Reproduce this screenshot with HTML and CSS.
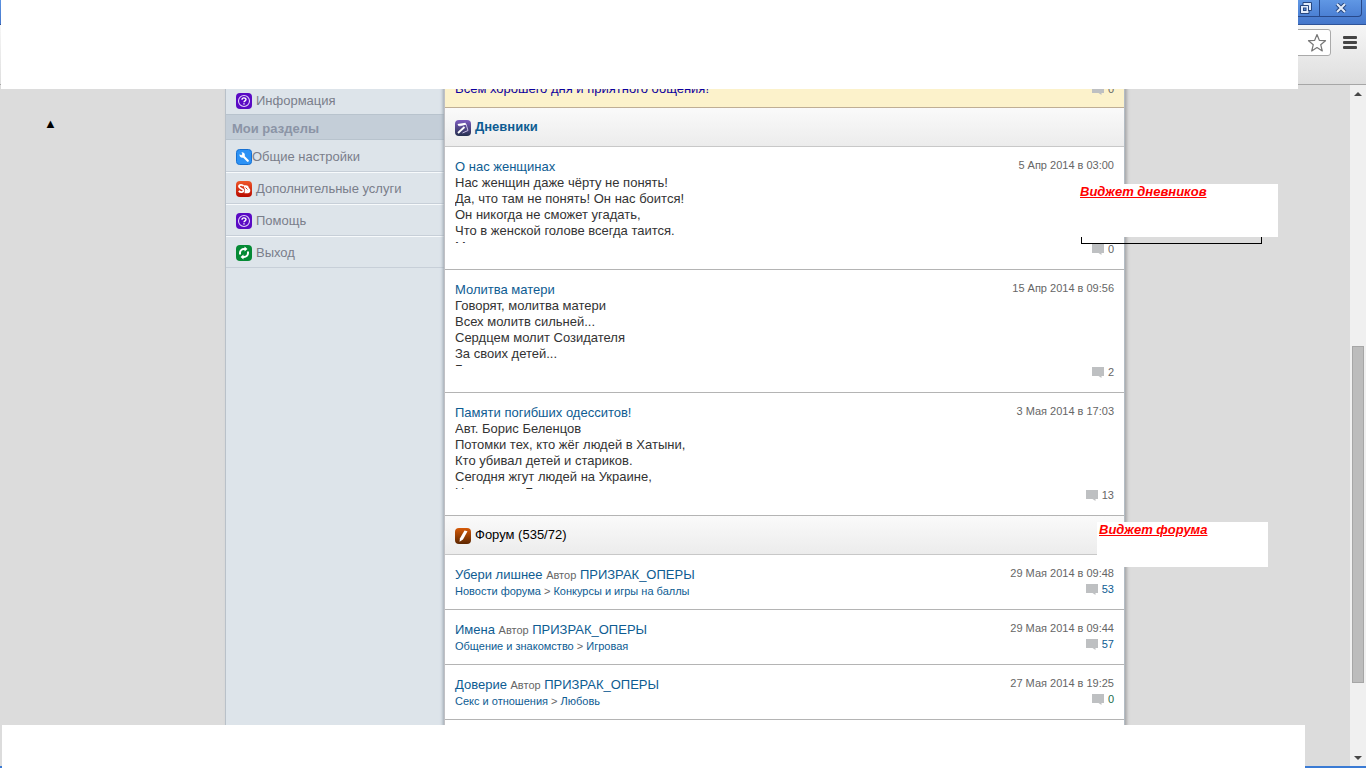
FILE: index.html
```html
<!DOCTYPE html>
<html lang="ru">
<head>
<meta charset="utf-8">
<title>Дневники и форум</title>
<link rel="stylesheet" href="styles.css">
</head>
<body>
<svg class="defs" aria-hidden="true">
  <defs>
    <linearGradient id="g-red" x1="0" y1="0" x2="0" y2="1"><stop offset="0" stop-color="#f0582a"/><stop offset="1" stop-color="#b80a00"/></linearGradient>
    <linearGradient id="g-violet" x1="0" y1="0" x2="0" y2="1"><stop offset="0" stop-color="#7d5cc0"/><stop offset="1" stop-color="#25304f"/></linearGradient>
    <linearGradient id="g-orange" x1="0" y1="0" x2="0" y2="1"><stop offset="0" stop-color="#d65a08"/><stop offset="1" stop-color="#5c2600"/></linearGradient>
    <symbol id="i-help" viewBox="0 0 16 16"><rect width="16" height="16" rx="4" fill="#5a0ac4"/><circle cx="8" cy="8" r="5.5" fill="none" stroke="#e3d3fa" stroke-width="1.1"/><path d="M6 6.7C6 4.3 10 4.4 10 6.5C10 7.9 8 7.8 8 9.3M8 10.3V11.6" fill="none" stroke="#fff" stroke-width="1.4"/></symbol>
    <symbol id="i-wrench" viewBox="0 0 16 16"><rect x=".5" y=".5" width="15" height="15" rx="3" fill="#2c92f5" stroke="#1670d2"/><path d="M7 7L11.8 11.8" stroke="#fff" stroke-width="2.2" stroke-linecap="round"/><path d="M3.6 5.2A2.7 2.7 0 1 0 5.4 3.4L6.4 5L5.2 6.2Z" fill="#fff"/></symbol>
    <symbol id="i-services" viewBox="0 0 16 16"><rect width="16" height="16" rx="4" fill="url(#g-red)"/><path d="M7.500 5C6.500 3.300 3 3.300 3 5.600C3 7.900 7.500 7.200 7.500 9.500C7.500 11.500 4 11.500 2.800 9.900" fill="none" stroke="#fff" stroke-width="1.800"/><path d="M7.500 4.500C11 3.500 13 5 12.800 7C15 8 14.800 12 12 12.300H8.500C8.500 11 9.300 9.500 8.700 8Z" fill="#fff"/><path d="M9.500 6.500L11.500 8.500" stroke="#d83a1c"/></symbol>
    <symbol id="i-exit" viewBox="0 0 16 16"><rect width="16" height="16" rx="4" fill="#058a35"/><path d="M4 9.500V8A4 4 0 0 1 8 4H9M12 6.500V8A4 4 0 0 1 8 12H7" fill="none" stroke="#fff" stroke-width="2"/><path d="M8.500 1.500L11.500 4L8.500 6.500ZM7.500 9.500L4.500 12L7.500 14.500Z" fill="#fff"/></symbol>
    <symbol id="i-diary" viewBox="0 0 16 16"><rect width="16" height="16" rx="4" fill="url(#g-violet)"/><path d="M4.500 6L11 4L13 10.500L7.500 13" fill="none" stroke="#c9c0e4"/><path d="M2.500 4L10.500 2.800L11 4.800L3.500 6Z" fill="#fff"/><path d="M3 13L9.500 7" stroke="#fff" stroke-width="1.800"/></symbol>
    <symbol id="i-forum" viewBox="0 0 16 16"><rect width="16" height="16" rx="4" fill="url(#g-orange)"/><path d="M9.500 2.500L12.500 3.200L8 11.500L4.500 13.800L5 10.300Z" fill="#fff"/></symbol>
    <symbol id="i-comment" viewBox="0 0 12 12"><path d="M0 1H12V10H9.500V12L6.500 10H0Z" fill="#bec0c2"/></symbol>
  </defs>
</svg>

<header class="titlebar">
  <button class="win-btn" aria-label="Свернуть в окно"><svg width="14" height="14" viewBox="0 0 14 14"><path d="M4 1.500H12.500V9.500H10V12.500H1.500V4.500H4Z" fill="#e2ecfb" stroke="#26467f"/><path d="M4 4.500H9.500V10" fill="none" stroke="#26467f"/><rect x="4.500" y="7" width="2.500" height="2.500" fill="#5b8ddc" stroke="#26467f"/></svg></button>
  <button class="win-btn win-close" aria-label="Закрыть"><svg width="12" height="10" viewBox="0 0 12 10"><path d="M2 1L10 9M10 1L2 9" stroke="#26467f" stroke-width="4"/><path d="M2 1L10 9M10 1L2 9" stroke="#e2ecfb" stroke-width="2"/></svg></button>
</header>
<div class="toolbar">
  <div class="address"><button class="plain" aria-label="В закладки"><svg width="20" height="20" viewBox="0 0 20 20"><path d="M10 1.500L12.300 7.300L18.500 7.700L13.700 11.700L15.300 18L10 14.500L4.700 18L6.300 11.700L1.500 7.700L7.700 7.300Z" fill="#fff" stroke="#777" stroke-width="1.200" stroke-linejoin="round"/></svg></button></div>
  <button class="plain menu" aria-label="Меню"><span></span><span></span><span></span></button>
</div>

<div class="viewport">
  <div class="canvas">
    <div class="page">
      <nav class="sidebar">
        <a class="nav-item first" href="#"><svg class="ico"><use href="#i-help"/></svg>Информация</a>
        <h2 class="nav-title">Мои разделы</h2>
        <a class="nav-item tight" href="#"><svg class="ico"><use href="#i-wrench"/></svg>Общие настройки</a>
        <a class="nav-item" href="#"><svg class="ico"><use href="#i-services"/></svg>Дополнительные услуги</a>
        <a class="nav-item" href="#"><svg class="ico"><use href="#i-help"/></svg>Помощь</a>
        <a class="nav-item" href="#"><svg class="ico"><use href="#i-exit"/></svg>Выход</a>
      </nav>
      <main class="content">
        <div class="banner"><span>Всем хорошего дня и приятного общения!</span><span class="count"><svg class="bubble"><use href="#i-comment"/></svg>0</span></div>

        <h2 class="section"><svg class="ico"><use href="#i-diary"/></svg><a class="strong" href="#">Дневники</a></h2>
        <article class="diary">
          <div class="text"><a href="#">О нас женщинах</a><br>Нас женщин даже чёрту не понять!<br>Да, что там не понять! Он нас боится!<br>Он никогда не сможет угадать,<br>Что в женской голове всегда таится.<br>Мы</div>
          <div class="meta"><time>5 Апр 2014 в 03:00</time><span class="count"><svg class="bubble"><use href="#i-comment"/></svg>0</span></div>
        </article>
        <article class="diary">
          <div class="text"><a href="#">Молитва матери</a><br>Говорят, молитва матери<br>Всех молитв сильней...<br>Сердцем молит Созидателя<br>За своих детей...<br>Г</div>
          <div class="meta"><time>15 Апр 2014 в 09:56</time><span class="count"><svg class="bubble"><use href="#i-comment"/></svg>2</span></div>
        </article>
        <article class="diary">
          <div class="text"><a href="#">Памяти погибших одесситов!</a><br>Авт. Борис Беленцов<br>Потомки тех, кто жёг людей в Хатыни,<br>Кто убивал детей и стариков.<br>Сегодня жгут людей на Украине,<br>Не люди, а Бесы</div>
          <div class="meta"><time>3 Мая 2014 в 17:03</time><span class="count"><svg class="bubble"><use href="#i-comment"/></svg>13</span></div>
        </article>

        <h2 class="section"><svg class="ico"><use href="#i-forum"/></svg>Форум (535/72)</h2>
        <article class="topic">
          <div><p class="topic-title"><a href="#">Убери лишнее</a> <small>Автор</small> <a href="#">ПРИЗРАК_ОПЕРЫ</a></p><p class="crumbs"><a href="#">Новости форума</a> &gt; <a href="#">Конкурсы и игры на баллы</a></p></div>
          <div class="meta"><time>29 Мая 2014 в 09:48</time><a class="count" href="#"><svg class="bubble"><use href="#i-comment"/></svg>53</a></div>
        </article>
        <article class="topic">
          <div><p class="topic-title"><a href="#">Имена</a> <small>Автор</small> <a href="#">ПРИЗРАК_ОПЕРЫ</a></p><p class="crumbs"><a href="#">Общение и знакомство</a> &gt; <a href="#">Игровая</a></p></div>
          <div class="meta"><time>29 Мая 2014 в 09:44</time><a class="count" href="#"><svg class="bubble"><use href="#i-comment"/></svg>57</a></div>
        </article>
        <article class="topic">
          <div><p class="topic-title"><a href="#">Доверие</a> <small>Автор</small> <a href="#">ПРИЗРАК_ОПЕРЫ</a></p><p class="crumbs"><a href="#">Секс и отношения</a> &gt; <a href="#">Любовь</a></p></div>
          <div class="meta"><time>27 Мая 2014 в 19:25</time><a class="count green" href="#"><svg class="bubble"><use href="#i-comment"/></svg>0</a></div>
        </article>
      </main>
    </div>
  </div>
  <div class="scrollbar"><svg width="8" height="4" viewBox="0 0 8 4"><path d="M4 0L8 4H0Z"/></svg><div class="track"><div class="thumb"></div></div><svg width="8" height="4" viewBox="0 0 8 4"><path d="M0 0H8L4 4Z"/></svg></div>
</div>

<a class="to-top" href="#">▲</a>
<div class="cover cover-top"></div>
<div class="cover cover-bottom"></div>
<div class="outline"></div>
<div class="note note-diary">Виджет дневников</div>
<div class="note note-forum">Виджет форума</div>
</body>
</html>
```
FILE: styles.css
```css
* { box-sizing: border-box; }
body {
  margin: 0;
  height: 100vh;
  display: flex;
  flex-direction: column;
  position: relative;
  overflow: hidden;
  background: #dcdcdc;
  color: #333;
  font: 13px/16px "Liberation Sans", Arial, sans-serif;
}
a { color: #0e5c92; text-decoration: none; }
h2, p { margin: 0; font-size: 13px; font-weight: normal; }
button { border: 0; padding: 0; background: none; }
.defs { position: absolute; width: 0; height: 0; }

.titlebar {
  display: flex;
  justify-content: flex-end;
  height: 25px;
  flex: none;
  padding-right: 4px;
  background: linear-gradient(#5b92e2, #4577cb);
  border-bottom: 1px solid #2f5499;
}
.win-btn {
  width: 27px;
  height: 17px;
  display: flex;
  align-items: center;
  justify-content: center;
  background: linear-gradient(#6097e4, #4b80d4);
  border-bottom: 1px solid #28498a;
}
.win-close { width: 43px; border: solid #28498a; border-width: 0 1px 1px; border-radius: 0 0 4px 0; }
.toolbar {
  display: flex;
  justify-content: flex-end;
  align-items: flex-start;
  gap: 12px;
  height: 60px;
  flex: none;
  padding: 4px 9px 0 0;
  background: linear-gradient(#f6f6f6, #dedede);
  border-bottom: 1px solid #a6a6a6;
}
.address {
  width: 60%;
  height: 27px;
  padding: 3px;
  text-align: right;
  background: #fff;
  border: 1px solid #aaa;
  border-radius: 3px;
}
.menu { display: flex; flex-direction: column; gap: 2px; padding-top: 7px; }
.menu span { width: 14px; height: 3px; border-radius: 1px; background: #444; }

.viewport { display: flex; flex: 1; min-height: 0; border-bottom: 2px solid #3b7bd4; }
.canvas { flex: 1; overflow: hidden; }
.page {
  display: flex;
  width: 100%;
  max-width: 900px;
  min-height: 100%;
  margin: 0 auto;
  background: #dde4ea;
  border: solid #b9c1c9;
  border-width: 0 1px;
  box-shadow: 2px 0 3px #aaa;
}
.sidebar { width: 218px; flex: none; }
.nav-item {
  display: flex;
  align-items: center;
  gap: 4px;
  height: 32px;
  padding: 2px 10px 0;
  color: #7a7e8a;
  border-bottom: 1px solid #c7cfd8;
  box-shadow: inset 0 1px #f7fafc;
}
.nav-item.first { height: 29px; border: 0; box-shadow: none; }
.nav-item.tight { gap: 0; box-shadow: none; }
.nav-title {
  height: 26px;
  padding: 6px;
  color: #8b94a6;
  font-weight: bold;
  background: #c4ced8;
  border: solid #b8c3cd;
  border-width: 1px 0;
}
.ico { width: 16px; height: 16px; flex: none; }

.content {
  flex: 1;
  background: #fff;
  border-left: 1px solid #c0c0c4;
  box-shadow: -1px 0 3px #9aa4ae;
}
.banner {
  display: flex;
  justify-content: space-between;
  align-items: flex-end;
  height: 23px;
  overflow: hidden;
  padding: 0 10px 10px;
  color: #0b00a0;
  background: #fcf2cb;
  border-bottom: 1px solid #bfae94;
}
.section {
  display: flex;
  align-items: center;
  gap: 4px;
  height: 39px;
  padding: 0 10px 1px;
  color: #000;
  background: linear-gradient(#fafafa, #ececec);
  border-bottom: 1px solid #c8c8c8;
}
.section .ico { margin-top: 2px; }
.strong { font-weight: bold; }
.diary, .topic {
  display: flex;
  justify-content: space-between;
  border-bottom: 1px solid #b4b4b4;
}
.diary { height: 123px; padding: 11px 10px 12px; }
.text { height: 85px; overflow: hidden; padding-top: 1px; }
.meta {
  display: flex;
  flex-direction: column;
  justify-content: space-between;
  align-items: flex-end;
  color: #666;
  font-size: 11px;
  line-height: 14px;
}
.count { display: flex; align-items: center; gap: 4px; font-size: 11px; line-height: 16px; }
.banner .count { color: #666; }
.bubble { width: 12px; height: 12px; }
.topic { height: 55px; padding: 11px 10px 10px; }
.topic .meta { justify-content: flex-start; gap: 1px; }
.topic small, .crumbs { color: #666; font-size: 11px; }
.topic-title { line-height: 17px; }
.crumbs { line-height: 14px; }
.count.green { color: #1c6b4c; }

.scrollbar {
  display: flex;
  flex-direction: column;
  align-items: center;
  width: 16px;
  padding: 7px 0 6px;
  background: #f0f0f0;
}
.scrollbar svg { fill: #484848; flex: none; }
.track { flex: 1; width: 12px; display: flex; flex-direction: column; }
.track::before { content: ""; flex: 251; }
.track::after { content: ""; flex: 73; }
.thumb { flex: 336; background: #bcbcbc; border: 1px solid #a6a6a6; }

.to-top { position: absolute; left: 44px; top: 116px; color: #000; }
.cover, .note { position: absolute; background: #fff; }
.cover-top { left: 1px; right: 68px; top: 0; height: 89px; }
.cover-bottom { left: 2px; right: 61px; top: 725px; bottom: 0; }
.outline { position: absolute; left: 1081px; top: 190px; width: 181px; height: 54px; border: 1px solid #000; }
.note { padding-left: 2px; color: #f00; font-size: 13px; font-style: italic; font-weight: bold; text-decoration: underline; }
.note-diary { left: 1078px; top: 184px; width: 200px; height: 53px; }
.note-forum { left: 1097px; top: 522px; width: 171px; height: 45px; }
```
